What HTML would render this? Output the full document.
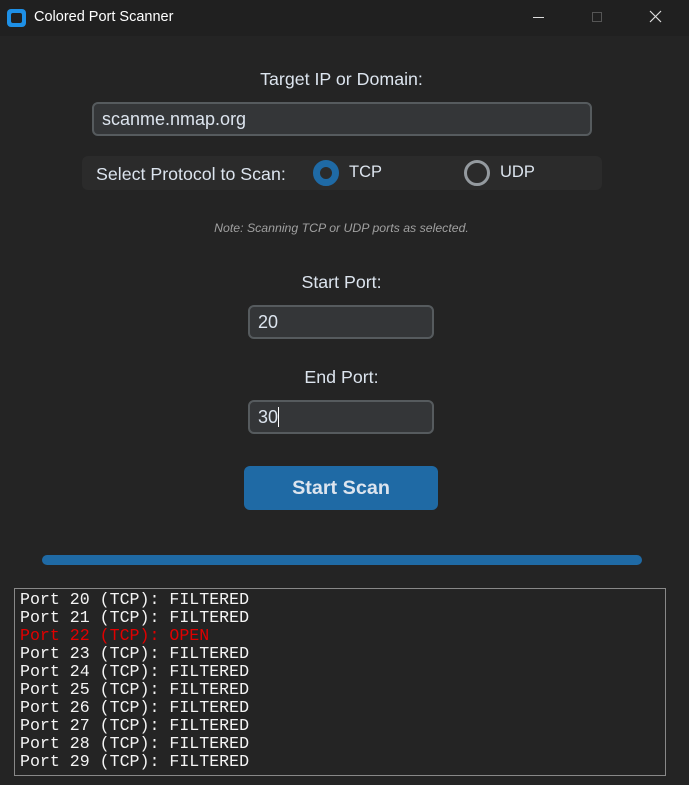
<!DOCTYPE html>
<html><head><meta charset="utf-8"><style>
*{margin:0;padding:0;box-sizing:border-box}
body{width:689px;height:785px;background:#242424;font-family:"Liberation Sans",sans-serif;color:#dce4ee;position:relative;overflow:hidden}
.a{position:absolute}
.t{position:absolute;left:0;width:683px;text-align:center;font-size:17.8px}
.inp{position:absolute;background:#343638;border:2px solid #565b5e;border-radius:6px;color:#dce4ee;font-size:18px;padding-left:8px;display:flex;align-items:center}
pre{font-family:"Liberation Mono",monospace;font-size:16.6px;line-height:18px;color:#f4f4f4}
</style></head><body>
<div class="a" style="left:0;top:0;width:689px;height:36px;background:#202020"></div>
<div class="a" style="left:7px;top:9px;width:19px;height:18px;background:#1e90e6;border-radius:4px"></div>
<div class="a" style="left:11px;top:13px;width:11px;height:10px;background:#202020;border-radius:2px"></div>
<div class="a" style="left:34px;top:9px;font-size:14.5px;color:#fff">Colored Port Scanner</div>
<div class="a" style="left:533px;top:17px;width:11px;height:1px;background:#ddd"></div>
<div class="a" style="left:592px;top:12px;width:10px;height:10px;border:1px solid #555"></div>
<svg class="a" style="left:649px;top:10px" width="13" height="13"><path d="M1 1L12 12M12 1L1 12" stroke="#ddd" stroke-width="1.2"/></svg>
<div class="t" style="top:69px">Target IP or Domain:</div>
<div class="inp" style="left:92px;top:102px;width:500px;height:34px">scanme.nmap.org</div>
<div class="a" style="left:82px;top:156px;width:520px;height:34px;background:#2b2b2b;border-radius:6px"></div>
<div class="a" style="left:96px;top:164px;font-size:17.8px">Select Protocol to Scan:</div>
<div class="a" style="left:313px;top:160px;width:26px;height:26px;border-radius:50%;border:7px solid #1f6aa5;background:#2b2b2b"></div>
<div class="a" style="left:349px;top:163px;font-size:16.5px">TCP</div>
<div class="a" style="left:464px;top:160px;width:26px;height:26px;border-radius:50%;border:3px solid #949a9f"></div>
<div class="a" style="left:500px;top:163px;font-size:16.5px">UDP</div>
<div class="t" style="top:221px;font-size:12.3px;font-style:italic;color:#a0a0a0">Note: Scanning TCP or UDP ports as selected.</div>
<div class="t" style="top:272px">Start Port:</div>
<div class="inp" style="left:248px;top:305px;width:186px;height:34px">20</div>
<div class="t" style="top:367px">End Port:</div>
<div class="inp" style="left:248px;top:400px;width:186px;height:34px">30<span style="display:inline-block;width:1px;height:20px;background:#fff"></span></div>
<div class="a" style="left:244px;top:466px;width:194px;height:44px;background:#1f6aa5;border-radius:6px;color:#dce4ee;font-size:19.8px;font-weight:bold;display:flex;align-items:center;justify-content:center">Start Scan</div>
<div class="a" style="left:42px;top:555px;width:600px;height:10px;background:#1f6aa5;border-radius:5px"></div>
<div class="a" style="left:14px;top:588px;width:652px;height:188px;border:1px solid #888;background:#242424"></div>
<pre class="a" style="left:20px;top:591px">Port 20 (TCP): FILTERED
Port 21 (TCP): FILTERED
<span style="color:#e00000">Port 22 (TCP): OPEN</span>
Port 23 (TCP): FILTERED
Port 24 (TCP): FILTERED
Port 25 (TCP): FILTERED
Port 26 (TCP): FILTERED
Port 27 (TCP): FILTERED
Port 28 (TCP): FILTERED
Port 29 (TCP): FILTERED</pre>
</body></html>
